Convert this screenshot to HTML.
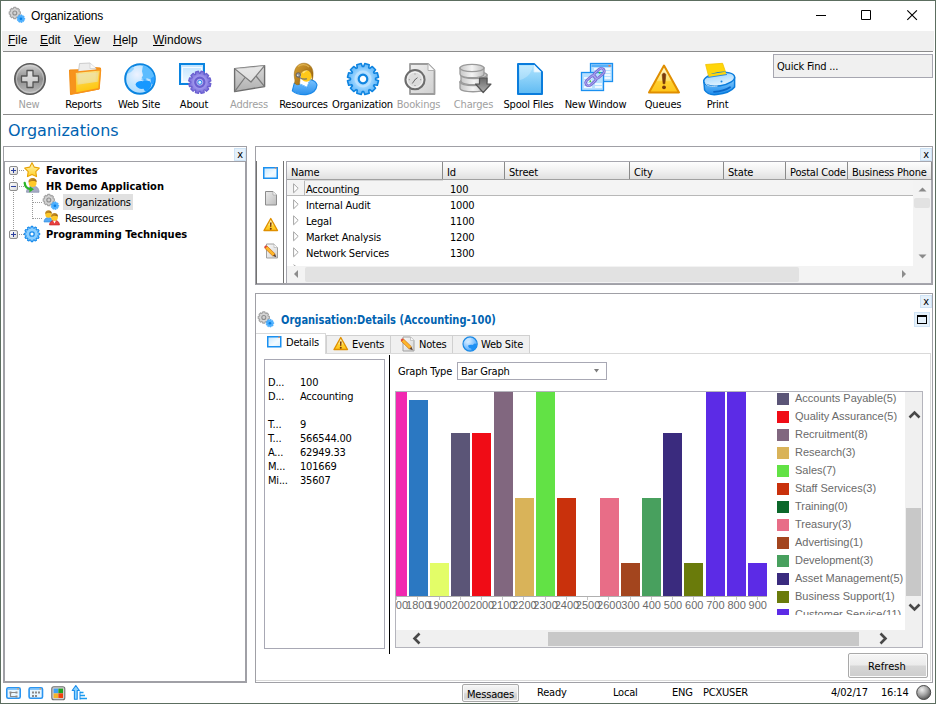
<!DOCTYPE html>
<html><head><meta charset="utf-8"><title>Organizations</title>
<style>
*{box-sizing:border-box;margin:0;padding:0}
html,body{width:936px;height:704px;overflow:hidden;background:#fff}
body{font-family:"DejaVu Sans Condensed","DejaVu Sans","Liberation Sans",sans-serif;font-size:11px;letter-spacing:-0.2px;color:#000;position:relative}
.abs,.t,.tb,.ic{position:absolute}
.t{white-space:nowrap;line-height:14px;font-size:11px;margin-top:1px}
#win{position:absolute;left:0;top:0;width:936px;height:704px;background:#fff}
#wb{position:absolute;left:0;top:0;width:936px;height:704px;border:1px solid #5c6e60;pointer-events:none}
#menubar{position:absolute;left:2px;top:31px;width:932px;height:20px;background:#f0f0f0}
.hline{position:absolute;height:1px;background:#8c8c8c}
.m{font-family:"Liberation Sans",sans-serif;letter-spacing:0;position:absolute;top:33px;font-size:12px;line-height:14px;white-space:nowrap}
.m u{text-decoration:underline;text-underline-offset:1px}
.tbl{position:absolute;top:98px;font-size:11px;line-height:14px;white-space:nowrap;text-align:center;transform:translateX(-50%)}
.dis{color:#a0a0a0}
.panel{position:absolute;border:2px solid #a3a3ab;background:#fff}
.xb{position:absolute;width:12px;height:14px;background:#e5f1fb;border:1px solid #cfe3f5;font-size:11px;line-height:11px;text-align:center;color:#000}
.tree{margin-top:1px;position:absolute;font-size:11px;line-height:16px;white-space:nowrap}
.b{font-weight:bold;letter-spacing:0}
.hd{position:absolute;top:162px;height:18px;border-right:1px solid #8a8a8a;background:linear-gradient(#fdfdfd,#f0f0f0 50%,#dedede);font-size:11px;line-height:18px;padding-top:2px;padding-left:4px;white-space:nowrap;overflow:hidden}
.row{margin-top:1px;position:absolute;font-size:11px;line-height:16px;white-space:nowrap}
.tab{position:absolute;top:335px;height:18px;background:#f0f0f0;border:1px solid #d0d0d0;border-bottom:none;font-size:11px;line-height:16px;white-space:nowrap}
.lg{position:absolute;left:777px;width:12px;height:12px}
.lt{font-family:"Liberation Sans",sans-serif;letter-spacing:0;position:absolute;left:795px;font-size:11px;line-height:14px;color:#6a6a6a;white-space:nowrap}
.bar{position:absolute}
.xl{font-family:"Liberation Sans",sans-serif;letter-spacing:0;position:absolute;top:599px;font-size:11px;line-height:14px;color:#6a6a6a;white-space:nowrap;transform:translateX(-50%)}
</style></head><body>
<div id="win">
<!-- title bar -->
<div class="t" id="title" style="left:31px;top:7px;font-family:'Liberation Sans',sans-serif;font-size:12px;line-height:16px;letter-spacing:-0.15px">Organizations</div>
<svg class="abs" style="left:810px;top:5px" width="114" height="20" viewBox="810 5 114 20"><path d="M816 15.500h10" stroke="#000" stroke-width="1"/><path d="M861.500 10.500h9v9h-9z" fill="none" stroke="#000" stroke-width="1"/><path d="M907.300 10.300l9.600 9.600M916.900 10.300l-9.600 9.600" stroke="#000" stroke-width="1.150"/></svg>
<!-- menu -->
<div id="menubar"></div>
<div class="m" style="left:8px"><u>F</u>ile</div>
<div class="m" style="left:40px"><u>E</u>dit</div>
<div class="m" style="left:74px"><u>V</u>iew</div>
<div class="m" style="left:113px"><u>H</u>elp</div>
<div class="m" style="left:153px"><u>W</u>indows</div>
<div class="hline" style="left:3px;top:51px;width:930px"></div>
<!-- toolbar -->
<!-- TOOLBAR ICONS -->
<svg class="abs" style="left:0;top:56px" width="936" height="44" viewBox="0 56 936 44">
<defs>
<linearGradient id="gNew" x1="0" y1="0" x2="0" y2="1"><stop offset="0" stop-color="#d2d2d2"/><stop offset=".5" stop-color="#8c8c8c"/><stop offset="1" stop-color="#bdbdbd"/></linearGradient>
<linearGradient id="gPlus" x1="0" y1="0" x2="0" y2="1"><stop offset="0" stop-color="#e6e6e6"/><stop offset="1" stop-color="#c4c4c4"/></linearGradient>
<linearGradient id="gFold" x1="0" y1="0" x2=".3" y2="1"><stop offset="0" stop-color="#f6e49a"/><stop offset=".55" stop-color="#ffdc40"/><stop offset="1" stop-color="#ffcd0a"/></linearGradient>
<radialGradient id="gGlobe" cx=".4" cy=".35" r=".75"><stop offset="0" stop-color="#eef2ff"/><stop offset=".45" stop-color="#c4e6ff"/><stop offset="1" stop-color="#a4d8ff"/></radialGradient>
<linearGradient id="gWin" x1="0" y1="0" x2="0" y2="1"><stop offset="0" stop-color="#bfe3ff"/><stop offset="1" stop-color="#f2faff"/></linearGradient>
<radialGradient id="gPGear" cx=".5" cy=".5" r=".5"><stop offset="0" stop-color="#c9c4f6"/><stop offset=".6" stop-color="#9a91ea"/><stop offset="1" stop-color="#7468d6"/></radialGradient>
<linearGradient id="gEnv" x1="0" y1="0" x2="0" y2="1"><stop offset="0" stop-color="#d8d8d8"/><stop offset="1" stop-color="#b0b0b0"/></linearGradient>
<radialGradient id="gBGear" cx=".5" cy=".5" r=".5"><stop offset="0" stop-color="#d6eeff"/><stop offset=".55" stop-color="#9ad4ff"/><stop offset="1" stop-color="#5cb4f8"/></radialGradient>
<linearGradient id="gDoc" x1="0" y1="0" x2="1" y2="1"><stop offset="0" stop-color="#f0f0f0"/><stop offset="1" stop-color="#cfcfcf"/></linearGradient>
<linearGradient id="gBDoc" x1="0" y1="0" x2="0" y2="1"><stop offset="0" stop-color="#b4e6ff"/><stop offset="1" stop-color="#5fbaf2"/></linearGradient>
<linearGradient id="gDb" x1="0" y1="0" x2="1" y2="0"><stop offset="0" stop-color="#c8c8c8"/><stop offset=".5" stop-color="#f4f4f4"/><stop offset="1" stop-color="#c0c0c0"/></linearGradient>
<linearGradient id="gArr" x1="0" y1="0" x2="0" y2="1"><stop offset="0" stop-color="#6a6a6a"/><stop offset="1" stop-color="#b0b0b0"/></linearGradient>
<linearGradient id="gWarn" x1="0" y1="0" x2="0" y2="1"><stop offset="0" stop-color="#fffbe0"/><stop offset=".55" stop-color="#ffe36a"/><stop offset=".6" stop-color="#ffd030"/><stop offset="1" stop-color="#ffc61a"/></linearGradient>
<linearGradient id="gPrnT" x1="0" y1="0" x2="0" y2="1"><stop offset="0" stop-color="#9ad4ff"/><stop offset="1" stop-color="#e4f4ff"/></linearGradient>
<linearGradient id="gPrnF" x1="0" y1="0" x2="0" y2="1"><stop offset="0" stop-color="#8cd0ff"/><stop offset="1" stop-color="#1e8cec"/></linearGradient>
<linearGradient id="gHair" x1="0" y1="0" x2="1" y2="1"><stop offset="0" stop-color="#d9a233"/><stop offset="1" stop-color="#8f5a08"/></linearGradient>
<linearGradient id="gBody" x1="0" y1="0" x2="0" y2="1"><stop offset="0" stop-color="#7cc4ff"/><stop offset="1" stop-color="#2a90ec"/></linearGradient>
</defs>
<!-- New -->
<g>
<circle cx="30" cy="79" r="15.2" fill="url(#gNew)" stroke="#5a5a5a" stroke-width="1.6"/>
<circle cx="30" cy="79" r="13.6" fill="none" stroke="#e0e0e0" stroke-opacity=".5" stroke-width="1"/>
<path d="M27 70.5h6v5.5h5.5v6H33v5.5h-6V82h-5.5v-6H27z" fill="url(#gPlus)" stroke="#555" stroke-width="1.3" stroke-linejoin="round"/>
</g>
<!-- Reports folder -->
<g>
<path d="M69.500 70l22.500 -.5l1-2l7.500 .5l-1.500 21l-28.500 5.500z" fill="#f7941d" stroke="#f28c12" stroke-width="1" stroke-linejoin="round"/>
<path d="M78.500 71l1-7.500l10.500-.5l6 5.500v13l-17.500 2z" fill="#ededed" stroke="#c2c2c2" stroke-width=".8"/>
<path d="M90 63.200v5.300h6" fill="#fafafa" stroke="#c8c8c8" stroke-width=".6"/>
<path d="M75 72.200l25.500-2.400l-1.500 19l-23.400 4.400z" fill="url(#gFold)" fill-opacity=".88" stroke="#f7941d" stroke-width="1.500" stroke-linejoin="round"/>
<path d="M77 74.300l21.500-2l-.8 9.500l-20.200 3z" fill="#e9e2c4" fill-opacity=".55"/>
</g>
<!-- Globe -->
<g>
<circle cx="140" cy="79" r="14.800" fill="url(#gGlobe)" stroke="#0a84e0" stroke-width="2"/>
<path d="M143 65.200c5.500 1 10.500 6 11.300 12.300l-4.300 1.700l-3-1l-2.500 1.500l-3-1.500l1.500-3l-1-4z" fill="#5cbcff"/>
<path d="M135.500 84.500c.5-2.500 3.500-3.800 7-3.300l3-.7l4.500 .8l1.500 3c-.5 3-2 5.500-4.500 7l-2 .3l-1.500-2.800c-3.500 .5-7-.8-8-4.300z" fill="#1798ff"/>
<path d="M150.500 78.500l4-2.500c.5 3 0 6-1.500 8.500l-2-1z" fill="#2aa0ff"/>
<path d="M141 79.800l4-.8 3 1.200-3.500 .8z" fill="#3aa8ff"/>
<path d="M127 74c1-3.500 3-6 6-7.500l1 2.500l-3 3z" fill="#8cd0ff" fill-opacity=".9"/>
</g>
<!-- About -->
<g>
<rect x="180" y="64" width="24" height="20" fill="url(#gWin)" stroke="#0a84e0" stroke-width="2"/>
<rect x="182.500" y="67.500" width="19" height="14" fill="none" stroke="#fff" stroke-opacity=".8" stroke-width="1"/>
<g transform="translate(199.800 82.300)">
<path id="pg" d="M8.99 0.47L11.13 1.29L10.28 4.45L8.02 4.09L7.55 4.90L8.99 6.68L6.68 8.99L4.90 7.55L4.09 8.02L4.45 10.28L1.29 11.13L0.47 8.99L-0.47 8.99L-1.29 11.13L-4.45 10.28L-4.09 8.02L-4.90 7.55L-6.68 8.99L-8.99 6.68L-7.55 4.90L-8.02 4.09L-10.28 4.45L-11.13 1.29L-8.99 0.47L-8.99 -0.47L-11.13 -1.29L-10.28 -4.45L-8.02 -4.09L-7.55 -4.90L-8.99 -6.68L-6.68 -8.99L-4.90 -7.55L-4.09 -8.02L-4.45 -10.28L-1.29 -11.13L-0.47 -8.99L0.47 -8.99L1.29 -11.13L4.45 -10.28L4.09 -8.02L4.90 -7.55L6.68 -8.99L8.99 -6.68L7.55 -4.90L8.02 -4.09L10.28 -4.45L11.13 -1.29L8.99 -0.47z" fill="url(#gPGear)" stroke="#6a5fd0" stroke-width="1.200" stroke-linejoin="round"/>
<circle r="4.600" fill="none" stroke="#6a5fd0" stroke-width="2.200"/>
<circle r="2" fill="#dff2ff" stroke="#2a8ce8" stroke-width="1"/>
</g>
</g>
<!-- Address envelope -->
<g>
<path d="M234.600 68.600L264.600 65.600V86.600L234.600 91.600z" fill="url(#gEnv)" stroke="#6e6e6e" stroke-width="1.400" stroke-linejoin="round"/>
<path d="M234.600 68.600L251 82L264.600 65.600" fill="#f2f2f2" fill-opacity=".6" stroke="#7a7a7a" stroke-width="1.200" stroke-linejoin="round"/>
<path d="M234.600 91.600L245 77.500M264.600 86.600L256 76" stroke="#7a7a7a" stroke-width="1.200"/>
</g>
<!-- Resources person -->
<g>
<path d="M294.300 83.200l5.700 1l6.700 3l3.800-7.700c3.500 1 6 3 6.500 5.400c-.5 5.500-5 9-11 9.700c-5.500 .3-10.500-1-13.700-3.800z" fill="url(#gBody)" stroke="#1a88e8" stroke-width="1.100" stroke-linejoin="round"/>
<path d="M304.800 83.500l1.900 3.800l1.600-4z" fill="#fff"/><path d="M300 84.200l6.700 3l3.800-7.700" fill="none" stroke="#8cccff" stroke-width="1"/>
<ellipse cx="306.300" cy="75.700" rx="5.600" ry="6" fill="#ffc81a"/>
<path d="M303 73c2-3 5-3.500 7.500-2.500c1 1.500 1.500 3 1.500 5" fill="none" stroke="#ffe27a" stroke-width="1.500"/>
<path d="M294.500 78c-1.500-9 3-14.800 9.500-14.800c6 0 9.800 5 9 12.500c-.2 2-.5 3.500-1 4.500c.3-5-1-9.500-5-10.200c-3.500-.3-6 2-7 5.500c0 4 0 7-.8 9c-1.700 .6-3.700 .2-4.700-1.500c.5-1.500 .5-3 0-5z" fill="url(#gHair)" stroke="#9a6608" stroke-width=".5"/>
<path d="M298 66.500c3-2.500 8-2.500 11 .5" fill="none" stroke="#e8c060" stroke-width="1.200" stroke-opacity=".7"/>
<circle cx="298.300" cy="75" r="2.300" fill="#909090" stroke="#606060" stroke-width=".8"/>
<circle cx="297.700" cy="75.200" r=".8" fill="#f0f0f0"/>
<path d="M299.500 77.300c1.500 1.500 4 2 7 1.600" fill="none" stroke="#707070" stroke-width="1.200" stroke-linecap="round"/>
</g>
<!-- Organization gear -->
<g transform="translate(363 79)">
<path d="M12.58 0.66L15.50 1.79L14.32 6.20L11.23 5.72L10.57 6.86L12.52 9.30L9.30 12.52L6.86 10.57L5.72 11.23L6.20 14.32L1.79 15.50L0.66 12.58L-0.66 12.58L-1.79 15.50L-6.20 14.32L-5.72 11.23L-6.86 10.57L-9.30 12.52L-12.52 9.30L-10.57 6.86L-11.23 5.72L-14.32 6.20L-15.50 1.79L-12.58 0.66L-12.58 -0.66L-15.50 -1.79L-14.32 -6.20L-11.23 -5.72L-10.57 -6.86L-12.52 -9.30L-9.30 -12.52L-6.86 -10.57L-5.72 -11.23L-6.20 -14.32L-1.79 -15.50L-0.66 -12.58L0.66 -12.58L1.79 -15.50L6.20 -14.32L5.72 -11.23L6.86 -10.57L9.30 -12.52L12.52 -9.30L10.57 -6.86L11.23 -5.72L14.32 -6.20L15.50 -1.79L12.58 -0.66z" fill="url(#gBGear)" stroke="#0f84e0" stroke-width="1.600" stroke-linejoin="round"/>
<circle r="7.500" fill="none" stroke="#c4e6ff" stroke-width="2" stroke-opacity=".7"/>
<circle r="4.300" fill="#fff" stroke="#0f84e0" stroke-width="2.200"/>
</g>
<!-- Bookings -->
<g>
<path d="M410 64h18l6.500 6.500V94H410z" fill="url(#gDoc)" stroke="#9c9c9c" stroke-width="1.800" stroke-linejoin="round"/>
<path d="M428 64v6.500h6.500" fill="#fafafa" stroke="#b0b0b0" stroke-width="1"/>
<circle cx="415" cy="79.700" r="9.600" fill="#dcdcdc" stroke="#6c6c6c" stroke-width="2"/>
<circle cx="415" cy="79.700" r="7.600" fill="none" stroke="#f4f4f4" stroke-width="1"/>
<path d="M415 79.700l2.200-1.800M415 79.700l-2.500 3.500" stroke="#6a6a6a" stroke-width="1" stroke-linecap="round"/><path d="M415 73.500v1M415 85v1M408.800 79.700h1M420.200 79.700h1" stroke="#8a8a8a" stroke-width="1"/>
</g>
<!-- Charges -->
<g>
<g fill="url(#gDb)" stroke="#9a9a9a" stroke-width="1.300">
<path d="M460 82v6c0 5 26 5 26 0v-6z"/><ellipse cx="473" cy="82" rx="13" ry="3.600"/>
<path d="M461 75v6c0 5 26 5 26 0v-6z"/><ellipse cx="474" cy="75" rx="13" ry="3.600"/>
<path d="M460 68v6c0 5 24 5 24 0v-6z"/><ellipse cx="472" cy="68" rx="12" ry="3.600"/>
</g>
<path d="M479.500 78h7.500v6h4l-7.800 8.500-7.700-8.500h4z" fill="url(#gArr)" stroke="#555" stroke-width="1.200" stroke-linejoin="round"/>
</g>
<!-- Spool Files -->
<g>
<path d="M518 64h16l8 8V94H518z" fill="url(#gBDoc)" stroke="#0a7cdc" stroke-width="2" stroke-linejoin="round"/>
<path d="M534 65v7h7z" fill="#f0faff" stroke="#d4eeff" stroke-width=".8"/>
<path d="M520 66h13c-2 8-6 12-13 14z" fill="#fff" fill-opacity=".25"/>
</g>
<!-- New Window -->
<g>
<rect x="590.500" y="63.500" width="22" height="18" fill="#b8e0ff" stroke="#1a90f0" stroke-width="1.300"/>
<rect x="591.500" y="64.500" width="20" height="2.500" fill="#58b0f8"/>
<rect x="608.500" y="65" width="2" height="1.500" fill="#ff7a3a"/>
<path d="M594 69h8M594 72h8M594 75h8M604.500 69h6M604.500 72h6M604.500 75h6M604.500 78h6" stroke="#fff" stroke-width="1.400"/>
<rect x="581.500" y="72.500" width="22" height="18" fill="#b8e0ff" stroke="#1a90f0" stroke-width="1.300"/>
<path d="M584 78h8M584 81h8M584 84h8M584 87h8M595 84h7M595 87h7" stroke="#fff" stroke-width="1.400"/>
<g transform="rotate(-42 595 77)" fill="none" stroke="#7a70d6" stroke-width="2.800"><rect x="583.500" y="74" width="12" height="6" rx="3"/><rect x="594.500" y="74" width="12" height="6" rx="3"/></g>
<g transform="rotate(-42 595 77)" fill="none" stroke="#b4acf0" stroke-width=".9"><rect x="583.500" y="74" width="12" height="6" rx="3"/><rect x="594.500" y="74" width="12" height="6" rx="3"/></g>
<circle cx="590.300" cy="81.300" r="1" fill="#3cc83c"/><circle cx="599.700" cy="72.700" r="1" fill="#3cc83c"/>
</g>
<!-- Queues -->
<g>
<path d="M664 65.500L679 92.500H649z" fill="url(#gWarn)" stroke="#e08e00" stroke-width="2" stroke-linejoin="round"/>
<path d="M662.200 75c0-2.400 3.600-2.400 3.600 0l-.9 8.800h-1.800z" fill="#7a3a0a" stroke="#7a3a0a" stroke-width=".6"/>
<circle cx="664" cy="87.300" r="1.900" fill="#7a3a0a"/>
</g>
<!-- Print -->
<g>
<path d="M705.600 64.500l17-1.200 3.400 10-17.500 2.600z" fill="#ffd60a" stroke="#f2c200" stroke-width=".8"/>
<path d="M703.800 80.500l.8 9.500c2 3.500 7 5 12 4.500c8-.8 15-3.500 18-7.500v-9.500z" fill="url(#gPrnF)" stroke="#0a7cdc" stroke-width="1.500" stroke-linejoin="round"/>
<ellipse cx="719.200" cy="79.200" rx="15.600" ry="6.600" transform="rotate(-9 719.200 79.200)" fill="url(#gPrnT)" stroke="#0a7cdc" stroke-width="1.500"/>
<path d="M708 74.500l1 2.800 17.500-2.600-1-3z" fill="#ffd60a"/>
<path d="M707.500 77.500l19.500-3" stroke="#2a8ce8" stroke-width="1"/>
<circle cx="721.500" cy="81.500" r="1" fill="#1a84e0"/>
<path d="M714 91.800c6-.2 12-1.800 16-4.500" fill="none" stroke="#0a68c8" stroke-width="1.800" stroke-linecap="round"/>
<path d="M705.500 83c1 3 6 4 12 3" fill="none" stroke="#e8f6ff" stroke-width="1" stroke-opacity=".8"/>
</g>
</svg>
<!-- /TOOLBAR ICONS -->
<div class="tbl dis" style="left:29px">New</div>
<div class="tbl" style="left:83.5px">Reports</div>
<div class="tbl" style="left:139px">Web Site</div>
<div class="tbl" style="left:194px">About</div>
<div class="tbl dis" style="left:249px">Address</div>
<div class="tbl" style="left:303.5px">Resources</div>
<div class="tbl" style="left:362.5px">Organization</div>
<div class="tbl dis" style="left:418.5px">Bookings</div>
<div class="tbl dis" style="left:473.5px">Charges</div>
<div class="tbl" style="left:528.5px">Spool Files</div>
<div class="tbl" style="left:595.5px">New Window</div>
<div class="tbl" style="left:663px">Queues</div>
<div class="tbl" style="left:717.5px">Print</div>
<div class="abs" style="left:773px;top:54px;width:160px;height:24px;background:#f0f0f0;border:1px solid #a6a6b0"></div>
<div class="t" style="left:777px;top:59px">Quick Find ...</div>
<div class="hline" style="left:3px;top:114px;width:930px"></div>
<!-- heading -->
<div class="t" id="heading" style="left:8px;top:118px;font-family:'DejaVu Sans',sans-serif;font-size:16px;line-height:24px;letter-spacing:0;color:#0063b1">Organizations</div>

<!-- left panel -->
<div class="abs" style="left:3px;top:146px;width:244px;height:537px;border:1px solid #a0a0a6;background:#fff"></div>
<div class="abs" style="left:3px;top:161px;width:244px;height:522px;border:2px solid #a0a0a6;border-top-width:1px;background:#fff"></div>
<div class="xb" style="left:234px;top:148px;width:12px;height:13px">x</div>
<svg class="abs" style="left:9px;top:166px" width="9" height="9" viewBox="0 0 9 9"><defs><linearGradient id="eg9166" x1="0" y1="0" x2="1" y2="1"><stop offset="0" stop-color="#fff"/><stop offset="1" stop-color="#d8d8d8"/></linearGradient></defs><rect x=".5" y=".5" width="8" height="8" rx="1.5" fill="url(#eg9166)" stroke="#8e8e8e"/><path d="M2 4.5h5M4.5 2v5" stroke="#2b3f9e" stroke-width="1"/></svg>
<svg class="abs" style="left:9px;top:182px" width="9" height="9" viewBox="0 0 9 9"><defs><linearGradient id="eg9182" x1="0" y1="0" x2="1" y2="1"><stop offset="0" stop-color="#fff"/><stop offset="1" stop-color="#d8d8d8"/></linearGradient></defs><rect x=".5" y=".5" width="8" height="8" rx="1.5" fill="url(#eg9182)" stroke="#8e8e8e"/><path d="M2 4.5h5" stroke="#2b3f9e" stroke-width="1"/></svg>
<svg class="abs" style="left:9px;top:230px" width="9" height="9" viewBox="0 0 9 9"><defs><linearGradient id="eg9230" x1="0" y1="0" x2="1" y2="1"><stop offset="0" stop-color="#fff"/><stop offset="1" stop-color="#d8d8d8"/></linearGradient></defs><rect x=".5" y=".5" width="8" height="8" rx="1.5" fill="url(#eg9230)" stroke="#8e8e8e"/><path d="M2 4.5h5M4.5 2v5" stroke="#2b3f9e" stroke-width="1"/></svg>
<div class="abs" style="left:19px;top:170px;width:5px;height:1px;background-image:linear-gradient(90deg,#9a9a9a 1px,transparent 1px);background-size:2px 1px"></div>
<div class="abs" style="left:19px;top:186px;width:5px;height:1px;background-image:linear-gradient(90deg,#9a9a9a 1px,transparent 1px);background-size:2px 1px"></div>
<div class="abs" style="left:19px;top:234px;width:5px;height:1px;background-image:linear-gradient(90deg,#9a9a9a 1px,transparent 1px);background-size:2px 1px"></div>
<div class="abs" style="left:13px;top:176px;width:1px;height:6px;background-image:linear-gradient(#9a9a9a 1px,transparent 1px);background-size:1px 2px"></div>
<div class="abs" style="left:13px;top:192px;width:1px;height:38px;background-image:linear-gradient(#9a9a9a 1px,transparent 1px);background-size:1px 2px"></div>
<div class="abs" style="left:32px;top:194px;width:1px;height:25px;background-image:linear-gradient(#9a9a9a 1px,transparent 1px);background-size:1px 2px"></div>
<div class="abs" style="left:33px;top:202px;width:10px;height:1px;background-image:linear-gradient(90deg,#9a9a9a 1px,transparent 1px);background-size:2px 1px"></div>
<div class="abs" style="left:33px;top:218px;width:10px;height:1px;background-image:linear-gradient(90deg,#9a9a9a 1px,transparent 1px);background-size:2px 1px"></div>
<div class="abs" style="left:63px;top:194px;width:70px;height:16px;background:#e0e0e0"></div>
<div class="tree b" style="left:46px;top:162px">Favorites</div>
<div class="tree b" style="left:46px;top:178px">HR Demo Application</div>
<div class="tree" style="left:65px;top:194px">Organizations</div>
<div class="tree" style="left:65px;top:210px">Resources</div>
<div class="tree b" style="left:46px;top:226px">Programming Techniques</div>
<!-- tree icons -->
<!-- grid panel -->
<div class="abs" style="left:255px;top:146px;width:678px;height:139px;border:1px solid #a0a0a6;background:#fff"></div>
<div class="abs" style="left:256px;top:161px;width:1px;height:123px;background:#727272"></div>
<div class="abs" style="left:257px;top:283px;width:675px;height:1px;background:#a0a0a6"></div>
<div class="abs" style="left:283px;top:161px;width:1px;height:122px;background:#727272"></div>

<div class="xb" style="left:920px;top:148px;width:12px;height:13px">x</div>
<div class="abs" style="left:286px;top:161px;width:646px;height:123px;border:1px solid #a6a6ae;background:#fff"></div>
<div class="hd" style="left:287px;width:156px">Name</div>
<div class="hd" style="left:443px;width:62px">Id</div>
<div class="hd" style="left:505px;width:125px">Street</div>
<div class="hd" style="left:630px;width:94px">City</div>
<div class="hd" style="left:724px;width:62px">State</div>
<div class="hd" style="left:786px;width:62px">Postal Code</div>
<div class="hd" style="left:848px;width:84px">Business Phone</div>
<div class="abs" style="left:287px;top:179px;width:644px;height:1px;background:#a0a0a0"></div>
<div class="abs" style="left:287px;top:180px;width:626px;height:16px;background:#f4f4f4;border-bottom:1px solid #b8b8b8"></div>
<div class="abs" style="left:304px;top:180px;width:1px;height:16px;background:#b8b8b8"></div>
<div class="abs" style="left:304px;top:180px;width:139px;height:1px;background:#d8d8d8"></div>
<svg class="abs" style="left:293px;top:183px" width="6" height="11" viewBox="0 0 6 11"><path d="M.6 .8L5.200 5.300L.6 9.800z" fill="#fff" stroke="#a4a4a4" stroke-width="1"/></svg>
<div class="row" style="left:306px;top:181px">Accounting</div>
<div class="row" style="left:450px;top:181px">100</div>
<svg class="abs" style="left:293px;top:199px" width="6" height="11" viewBox="0 0 6 11"><path d="M.6 .8L5.200 5.300L.6 9.800z" fill="#fff" stroke="#a4a4a4" stroke-width="1"/></svg>
<div class="row" style="left:306px;top:197px">Internal Audit</div>
<div class="row" style="left:450px;top:197px">1000</div>
<svg class="abs" style="left:293px;top:215px" width="6" height="11" viewBox="0 0 6 11"><path d="M.6 .8L5.200 5.300L.6 9.800z" fill="#fff" stroke="#a4a4a4" stroke-width="1"/></svg>
<div class="row" style="left:306px;top:213px">Legal</div>
<div class="row" style="left:450px;top:213px">1100</div>
<svg class="abs" style="left:293px;top:231px" width="6" height="11" viewBox="0 0 6 11"><path d="M.6 .8L5.200 5.300L.6 9.800z" fill="#fff" stroke="#a4a4a4" stroke-width="1"/></svg>
<div class="row" style="left:306px;top:229px">Market Analysis</div>
<div class="row" style="left:450px;top:229px">1200</div>
<svg class="abs" style="left:293px;top:247px" width="6" height="11" viewBox="0 0 6 11"><path d="M.6 .8L5.200 5.300L.6 9.800z" fill="#fff" stroke="#a4a4a4" stroke-width="1"/></svg>
<div class="row" style="left:306px;top:245px">Network Services</div>
<div class="row" style="left:450px;top:245px">1300</div>
<svg class="abs" style="left:293px;top:264px" width="6" height="2" viewBox="0 0 6 2"><path d="M.5 .7L3 2.5" fill="none" stroke="#a6a6a6"/></svg>
<div class="abs" style="left:287px;top:266px;width:626px;height:17px;background:#f3f3f3"></div>
<div class="abs" style="left:305px;top:267px;width:494px;height:15px;background:#e2e2e2;border-radius:2px"></div>
<svg class="abs" style="left:294px;top:270px" width="4" height="8" viewBox="0 0 4 8"><path d="M4 0v8L0 4z" fill="#8c8c8c"/></svg>
<svg class="abs" style="left:902px;top:270px" width="4" height="8" viewBox="0 0 4 8"><path d="M0 0v8L4 4z" fill="#8c8c8c"/></svg>
<div class="abs" style="left:913px;top:180px;width:18px;height:103px;background:#f3f3f3"></div>
<div class="abs" style="left:914px;top:198px;width:16px;height:10px;background:#e2e2e2;border-radius:2px"></div>
<svg class="abs" style="left:918px;top:187px" width="9" height="5" viewBox="0 0 9 5"><path d="M.5 4.5h8L4.5 .5z" fill="#8a8a8a"/></svg>
<svg class="abs" style="left:918px;top:254px" width="9" height="5" viewBox="0 0 9 5"><path d="M.5 .5h8L4.5 4.5z" fill="#8a8a8a"/></svg>
<!-- grid side icons -->
<!-- detail panel -->
<div class="abs" style="left:255px;top:293px;width:678px;height:390px;border:1px solid #a0a0a6;background:#fff"></div>
<div class="xb" style="left:920px;top:295px;width:12px;height:13px">x</div>
<div class="abs" style="left:914px;top:312px;width:16px;height:15px;background:#e5f1fb;border:1px solid #cfe3f5"></div>
<div class="abs" style="left:917px;top:315px;width:10px;height:9px;border:1px solid #000;border-top-width:2px"></div>
<div class="t b" id="dtitle" style="left:281px;top:313px;color:#0063b1;transform:scaleY(1.13);transform-origin:0 85%;font-family:'DejaVu Sans',sans-serif;font-stretch:condensed">Organisation:Details (Accounting-100)</div>
<div class="abs" style="left:256px;top:353px;width:675px;height:328px;border:1px solid #d9d9d9;border-left:none;background:#fff"></div>
<div class="tab" style="left:326px;width:65px"></div>
<div class="tab" style="left:390px;width:63px"></div>
<div class="tab" style="left:452px;width:78px"></div>
<div class="abs" style="left:256px;top:333px;width:70px;height:21px;background:#fff;border:1px solid #d9d9d9;border-bottom:none;border-left:none"></div>
<div class="t" style="left:286px;top:335px">Details</div>
<div class="t" style="left:352px;top:337px">Events</div>
<div class="t" style="left:419px;top:337px">Notes</div>
<div class="t" style="left:481px;top:337px">Web Site</div>
<!-- tab icons -->
<div class="abs" style="left:264px;top:359px;width:121px;height:290px;border:1px solid #a8a8b4;background:#fff"></div>
<div class="abs" style="left:389px;top:355px;width:1px;height:299px;background:#000"></div>
<div class="t" style="left:268px;top:375px">D...</div><div class="t" style="left:300px;top:375px">100</div>
<div class="t" style="left:268px;top:389px">D...</div><div class="t" style="left:300px;top:389px">Accounting</div>
<div class="t" style="left:268px;top:417px">T...</div><div class="t" style="left:300px;top:417px">9</div>
<div class="t" style="left:268px;top:431px">T...</div><div class="t" style="left:300px;top:431px">566544.00</div>
<div class="t" style="left:268px;top:445px">A...</div><div class="t" style="left:300px;top:445px">62949.33</div>
<div class="t" style="left:268px;top:459px">M...</div><div class="t" style="left:300px;top:459px">101669</div>
<div class="t" style="left:268px;top:473px">Mi...</div><div class="t" style="left:300px;top:473px">35607</div>
<div class="t" style="left:398px;top:364px">Graph Type</div>
<div class="abs" style="left:457px;top:362px;width:150px;height:18px;border:1px solid #a8a8b4;background:#fff"></div>
<div class="t" style="left:461px;top:364px">Bar Graph</div>
<svg class="abs" style="left:594px;top:369px" width="5" height="4" viewBox="0 0 5 4"><path d="M0 0h5L2.500 3.600z" fill="#7c7c7c"/></svg>
<div id="chart" class="abs" style="left:395px;top:391px;width:528px;height:257px;border:1px solid #b4b4bc;background:#fff;overflow:hidden">
<div class="bar" style="left:-8.4px;top:0px;width:19px;height:204px;background:#f128b0"></div>
<div class="bar" style="left:13px;top:8px;width:19px;height:196px;background:#2b78c2"></div>
<div class="bar" style="left:34px;top:171px;width:19px;height:33px;background:#e3fd68"></div>
<div class="bar" style="left:55px;top:41px;width:19px;height:163px;background:#5b5577"></div>
<div class="bar" style="left:76.4px;top:41px;width:19px;height:163px;background:#f00c16"></div>
<div class="bar" style="left:97.6px;top:0px;width:19px;height:204px;background:#81677f"></div>
<div class="bar" style="left:119px;top:106px;width:19px;height:98px;background:#d9b359"></div>
<div class="bar" style="left:140px;top:0px;width:19px;height:204px;background:#62e245"></div>
<div class="bar" style="left:161px;top:106px;width:19px;height:98px;background:#c9310c"></div>
<div class="bar" style="left:203.8px;top:106px;width:19px;height:98px;background:#e86d87"></div>
<div class="bar" style="left:225px;top:171px;width:19px;height:33px;background:#a3451e"></div>
<div class="bar" style="left:246px;top:106px;width:19px;height:98px;background:#48a05e"></div>
<div class="bar" style="left:267px;top:41px;width:19px;height:163px;background:#3a2b7e"></div>
<div class="bar" style="left:288.3px;top:171px;width:19px;height:33px;background:#6a7b0b"></div>
<div class="bar" style="left:309.5px;top:0px;width:19px;height:204px;background:#5c2be6"></div>
<div class="bar" style="left:330.7px;top:0px;width:19px;height:204px;background:#5c2be6"></div>
<div class="bar" style="left:352px;top:171px;width:19px;height:33px;background:#5c2be6"></div>
<div class="abs" style="left:0;top:204px;width:371px;height:1px;background:#b0b0b0"></div>
<div class="abs" style="left:0.1px;top:205px;width:1px;height:3px;background:#c4c4c4"></div>
<div class="xl" style="left:-0.2px;top:206px">1700</div>
<div class="abs" style="left:21.3px;top:205px;width:1px;height:3px;background:#c4c4c4"></div>
<div class="xl" style="left:22.3px;top:206px">1800</div>
<div class="abs" style="left:42.5px;top:205px;width:1px;height:3px;background:#c4c4c4"></div>
<div class="xl" style="left:43.5px;top:206px">1900</div>
<div class="abs" style="left:63.8px;top:205px;width:1px;height:3px;background:#c4c4c4"></div>
<div class="xl" style="left:64.8px;top:206px">200</div>
<div class="abs" style="left:85.0px;top:205px;width:1px;height:3px;background:#c4c4c4"></div>
<div class="xl" style="left:86.0px;top:206px">2000</div>
<div class="abs" style="left:106.2px;top:205px;width:1px;height:3px;background:#c4c4c4"></div>
<div class="xl" style="left:107.2px;top:206px">2100</div>
<div class="abs" style="left:127.4px;top:205px;width:1px;height:3px;background:#c4c4c4"></div>
<div class="xl" style="left:128.4px;top:206px">2200</div>
<div class="abs" style="left:148.6px;top:205px;width:1px;height:3px;background:#c4c4c4"></div>
<div class="xl" style="left:149.6px;top:206px">2300</div>
<div class="abs" style="left:169.9px;top:205px;width:1px;height:3px;background:#c4c4c4"></div>
<div class="xl" style="left:170.9px;top:206px">2400</div>
<div class="abs" style="left:191.1px;top:205px;width:1px;height:3px;background:#c4c4c4"></div>
<div class="xl" style="left:192.1px;top:206px">2500</div>
<div class="abs" style="left:212.3px;top:205px;width:1px;height:3px;background:#c4c4c4"></div>
<div class="xl" style="left:213.3px;top:206px">2600</div>
<div class="abs" style="left:233.5px;top:205px;width:1px;height:3px;background:#c4c4c4"></div>
<div class="xl" style="left:234.5px;top:206px">300</div>
<div class="abs" style="left:254.7px;top:205px;width:1px;height:3px;background:#c4c4c4"></div>
<div class="xl" style="left:255.7px;top:206px">400</div>
<div class="abs" style="left:276.0px;top:205px;width:1px;height:3px;background:#c4c4c4"></div>
<div class="xl" style="left:277.0px;top:206px">500</div>
<div class="abs" style="left:297.2px;top:205px;width:1px;height:3px;background:#c4c4c4"></div>
<div class="xl" style="left:298.2px;top:206px">600</div>
<div class="abs" style="left:318.4px;top:205px;width:1px;height:3px;background:#c4c4c4"></div>
<div class="xl" style="left:319.4px;top:206px">700</div>
<div class="abs" style="left:339.6px;top:205px;width:1px;height:3px;background:#c4c4c4"></div>
<div class="xl" style="left:340.6px;top:206px">800</div>
<div class="abs" style="left:360.8px;top:205px;width:1px;height:3px;background:#c4c4c4"></div>
<div class="xl" style="left:361.8px;top:206px">900</div>
<div class="abs" style="left:374px;top:0;width:135px;height:223px;overflow:hidden;background:#fff">
<div class="lg" style="left:7px;top:1px;background:#5b5577"></div><div class="lt" style="left:25px;top:-1px">Accounts Payable(5)</div>
<div class="lg" style="left:7px;top:19px;background:#f00c16"></div><div class="lt" style="left:25px;top:17px">Quality Assurance(5)</div>
<div class="lg" style="left:7px;top:37px;background:#81677f"></div><div class="lt" style="left:25px;top:35px">Recruitment(8)</div>
<div class="lg" style="left:7px;top:55px;background:#d9b359"></div><div class="lt" style="left:25px;top:53px">Research(3)</div>
<div class="lg" style="left:7px;top:73px;background:#62e245"></div><div class="lt" style="left:25px;top:71px">Sales(7)</div>
<div class="lg" style="left:7px;top:91px;background:#c9310c"></div><div class="lt" style="left:25px;top:89px">Staff Services(3)</div>
<div class="lg" style="left:7px;top:109px;background:#0b672a"></div><div class="lt" style="left:25px;top:107px">Training(0)</div>
<div class="lg" style="left:7px;top:127px;background:#e86d87"></div><div class="lt" style="left:25px;top:125px">Treasury(3)</div>
<div class="lg" style="left:7px;top:145px;background:#a3451e"></div><div class="lt" style="left:25px;top:143px">Advertising(1)</div>
<div class="lg" style="left:7px;top:163px;background:#48a05e"></div><div class="lt" style="left:25px;top:161px">Development(3)</div>
<div class="lg" style="left:7px;top:181px;background:#3a2b7e"></div><div class="lt" style="left:25px;top:179px">Asset Management(5)</div>
<div class="lg" style="left:7px;top:199px;background:#6a7b0b"></div><div class="lt" style="left:25px;top:197px">Business Support(1)</div>
<div class="lg" style="left:7px;top:217px;background:#5c2be6"></div><div class="lt" style="left:25px;top:215px">Customer Service(11)</div>
</div>
<div class="abs" style="left:509px;top:0;width:18px;height:256px;background:#f0f0f0"></div>
<div class="abs" style="left:510px;top:116px;width:15px;height:88px;background:#c8c8c8"></div>
<div class="abs" style="left:0;top:238px;width:509px;height:18px;background:#f0f0f0"></div>
<div class="abs" style="left:152px;top:240px;width:311px;height:14px;background:#c8c8c8"></div>
<svg class="abs" style="left:512px;top:18px" width="13" height="9" viewBox="0 0 13 9"><path d="M1.5 7.5L6.5 2.5L11.5 7.5" fill="none" stroke="#484848" stroke-width="2.6"/></svg>
<svg class="abs" style="left:512px;top:211px" width="13" height="9" viewBox="0 0 13 9"><path d="M1.5 1.5L6.5 6.5L11.5 1.5" fill="none" stroke="#484848" stroke-width="2.6"/></svg>
<svg class="abs" style="left:16px;top:240px" width="9" height="13" viewBox="0 0 9 13"><path d="M7.5 1.5L2.5 6.5L7.5 11.5" fill="none" stroke="#484848" stroke-width="2.6"/></svg>
<svg class="abs" style="left:483px;top:240px" width="9" height="13" viewBox="0 0 9 13"><path d="M1.5 1.5L6.5 6.5L1.5 11.5" fill="none" stroke="#484848" stroke-width="2.6"/></svg>
</div>
<div class="abs" style="left:848px;top:653px;width:80px;height:25px;border:1px solid #a9a9a9;border-radius:2px;background:linear-gradient(#f6f6f6,#ebebeb 48%,#d6d6d6 52%,#cdcdcd);box-shadow:inset 0 0 0 1px #fbfbfb"></div>
<div class="t" style="left:868px;top:659px;letter-spacing:0.1px">Refresh</div>

<!-- status bar -->
<div class="abs" style="left:462px;top:684px;width:57px;height:18px;border:1px solid #a9a9a9;border-radius:2px;background:linear-gradient(#f6f6f6,#e9e9e9 45%,#d8d8d8 55%,#d2d2d2 80%,#e4e4e4);box-shadow:inset 0 0 0 1px #f8f8f8"><div class="abs" style="left:0;top:0;width:55px;height:13px;overflow:hidden"><div class="t" style="left:4px;top:2px">Messages</div></div></div>
<!-- ball -->
<!-- status icons -->
<div class="t" style="left:537px;top:685px">Ready</div>
<div class="t" style="left:613px;top:685px">Local</div>
<div class="t" style="left:672px;top:685px">ENG</div>
<div class="t" style="left:703px;top:685px">PCXUSER</div>
<div class="t" style="left:831px;top:685px">4/02/17</div>
<div class="t" style="left:881px;top:685px">16:14</div>
</div>
<!-- SMALL ICONS -->
<svg class="abs" style="left:0;top:0;pointer-events:none" width="936" height="704" viewBox="0 0 936 704">
<defs>
<linearGradient id="gWin2" x1="0" y1="0" x2="1" y2="1"><stop offset="0" stop-color="#c4e6ff"/><stop offset=".6" stop-color="#f4fbff"/><stop offset="1" stop-color="#d8efff"/></linearGradient>
<linearGradient id="gDoc2" x1="0" y1="0" x2="1" y2="1"><stop offset="0" stop-color="#ececec"/><stop offset="1" stop-color="#bcbcbc"/></linearGradient>
<linearGradient id="gDoc3" x1="0" y1="0" x2="1" y2="1"><stop offset="0" stop-color="#fafafa"/><stop offset="1" stop-color="#d4d4d4"/></linearGradient>
<radialGradient id="gGlobe2" cx=".35" cy=".3" r=".8"><stop offset="0" stop-color="#e4f2ff"/><stop offset=".6" stop-color="#7cc0ff"/><stop offset="1" stop-color="#3c9cf4"/></radialGradient>
<linearGradient id="gStar" x1="0" y1="0" x2="0" y2="1"><stop offset="0" stop-color="#fff6b8"/><stop offset="1" stop-color="#ffd028"/></linearGradient>
<radialGradient id="gBall" cx=".38" cy=".3" r=".75"><stop offset="0" stop-color="#f0f0f0"/><stop offset=".5" stop-color="#a8a8a8"/><stop offset="1" stop-color="#505050"/></radialGradient>
<linearGradient id="gHair2" x1="0" y1="0" x2="1" y2="1"><stop offset="0" stop-color="#d9a233"/><stop offset="1" stop-color="#8f5a08"/></linearGradient>
</defs>
<path d="M19.19 11.63L20.39 11.90L20.39 14.10L19.19 14.37L18.87 15.14L19.53 16.17L17.97 17.73L16.94 17.07L16.17 17.39L15.90 18.59L13.70 18.59L13.43 17.39L12.66 17.07L11.63 17.73L10.07 16.17L10.73 15.14L10.41 14.37L9.21 14.10L9.21 11.90L10.41 11.63L10.73 10.86L10.07 9.83L11.63 8.27L12.66 8.93L13.43 8.61L13.70 7.41L15.90 7.41L16.17 8.61L16.94 8.93L17.97 8.27L19.53 9.83L18.87 10.86z" fill="#d4d4d4" stroke="#a4a4a4" stroke-width="1.1" stroke-linejoin="round"/><circle cx="14.8" cy="13" r="2" fill="#d0d0d0" stroke="#8e8e8e" stroke-width="1.1"/><path d="M23.90 17.90L24.75 18.05L24.75 19.35L23.90 19.50L23.71 20.02L24.26 20.67L23.43 21.67L22.68 21.24L22.20 21.51L22.21 22.37L20.93 22.60L20.64 21.79L20.09 21.69L19.54 22.36L18.41 21.71L18.71 20.90L18.36 20.47L17.51 20.63L17.06 19.40L17.81 18.98L17.81 18.42L17.06 18.00L17.51 16.77L18.36 16.93L18.71 16.50L18.41 15.69L19.54 15.04L20.09 15.71L20.64 15.61L20.93 14.80L22.21 15.03L22.20 15.89L22.68 16.16L23.43 15.73L24.26 16.73L23.71 17.38z" fill="#4cb0ff" stroke="#3aa4fa" stroke-width=".6" stroke-linejoin="round"/><circle cx="20.9" cy="18.7" r="1.3" fill="#0a7ee0"/>
<path d="M32.00 162.70L34.35 167.16L39.32 168.02L35.80 171.64L36.53 176.63L32.00 174.40L27.47 176.63L28.20 171.64L24.68 168.02L29.65 167.16z" fill="url(#gStar)" stroke="#e8a200" stroke-width="1.1" stroke-linejoin="round"/>
<path d="M26.500 192.300c0-4 2.500-6 6-6h1c3.500 0 5.500 2 5.500 6z" fill="#a6abc4" stroke="#8890b0" stroke-width=".7"/>
<circle cx="32.600" cy="183" r="3.900" fill="#ffc928"/>
<path d="M28.600 182.500c-.5-3 1.500-4.600 4-4.600s4.500 1.600 4 4.400c-1.500-1.500-4.800-2-8 .2z" fill="url(#gHair2)"/>
<path d="M24.700 183c.3 3.500 2.500 5.800 6 6.200" fill="none" stroke="#2cb428" stroke-width="2.300" stroke-linecap="round"/>
<path d="M30 186.500l4 2.700-4.800 3.200z" fill="#2cb428"/>
<path d="M53.19 198.63L54.39 198.90L54.39 201.10L53.19 201.37L52.87 202.14L53.53 203.17L51.97 204.73L50.94 204.07L50.17 204.39L49.90 205.59L47.70 205.59L47.43 204.39L46.66 204.07L45.63 204.73L44.07 203.17L44.73 202.14L44.41 201.37L43.21 201.10L43.21 198.90L44.41 198.63L44.73 197.86L44.07 196.83L45.63 195.27L46.66 195.93L47.43 195.61L47.70 194.41L49.90 194.41L50.17 195.61L50.94 195.93L51.97 195.27L53.53 196.83L52.87 197.86z" fill="#d4d4d4" stroke="#a4a4a4" stroke-width="1.1" stroke-linejoin="round"/><circle cx="48.8" cy="200" r="2" fill="#d0d0d0" stroke="#8e8e8e" stroke-width="1.1"/><path d="M57.90 204.90L58.75 205.05L58.75 206.35L57.90 206.50L57.71 207.02L58.26 207.67L57.43 208.67L56.68 208.24L56.20 208.51L56.21 209.37L54.93 209.60L54.64 208.79L54.09 208.69L53.54 209.36L52.41 208.71L52.71 207.90L52.36 207.47L51.51 207.63L51.06 206.40L51.81 205.98L51.81 205.42L51.06 205.00L51.51 203.77L52.36 203.93L52.71 203.50L52.41 202.69L53.54 202.04L54.09 202.71L54.64 202.61L54.93 201.80L56.21 202.03L56.20 202.89L56.68 203.16L57.43 202.73L58.26 203.73L57.71 204.38z" fill="#4cb0ff" stroke="#3aa4fa" stroke-width=".6" stroke-linejoin="round"/><circle cx="54.9" cy="205.7" r="1.3" fill="#0a7ee0"/>
<path d="M44 222c0-3 2-4.500 4.500-4.500s4.500 1.500 4.500 4.500z" fill="#58aaf4" stroke="#2a86dc" stroke-width=".6"/>
<circle cx="48.500" cy="214.500" r="3.200" fill="#ffc928"/><path d="M45.200 214c-.3-2.500 1.300-3.800 3.300-3.800s3.600 1.300 3.300 3.500c-1.500-1.200-4-1.500-6.600 .3z" fill="url(#gHair2)"/>
<path d="M49.500 225c0-3 2.300-4.800 5-4.800s5 1.800 5 4.800z" fill="#e84040" stroke="#c02020" stroke-width=".6"/>
<path d="M53 220.500l1.500 3 1.500-3z" fill="#fff"/>
<circle cx="54.500" cy="217.500" r="3.300" fill="#ffc928"/><path d="M51.100 217c-.3-2.500 1.300-3.900 3.400-3.900s3.700 1.300 3.400 3.600c-1.500-1.200-4.200-1.500-6.800 .3z" fill="url(#gHair2)"/>
<path d="M38.22 232.98L39.66 233.20L39.66 234.80L38.22 235.02L37.89 236.23L39.03 237.13L38.23 238.53L36.88 237.99L35.99 238.88L36.53 240.23L35.13 241.03L34.23 239.89L33.02 240.22L32.80 241.66L31.20 241.66L30.98 240.22L29.77 239.89L28.87 241.03L27.47 240.23L28.01 238.88L27.12 237.99L25.77 238.53L24.97 237.13L26.11 236.23L25.78 235.02L24.34 234.80L24.34 233.20L25.78 232.98L26.11 231.77L24.97 230.87L25.77 229.47L27.12 230.01L28.01 229.12L27.47 227.77L28.87 226.97L29.77 228.11L30.98 227.78L31.20 226.34L32.80 226.34L33.02 227.78L34.23 228.11L35.13 226.97L36.53 227.77L35.99 229.12L36.88 230.01L38.23 229.47L39.03 230.87L37.89 231.77z" fill="#8ccfff" stroke="#1a8cec" stroke-width="1.1" stroke-linejoin="round"/>
<circle cx="32" cy="234" r="2.200" fill="#fff" stroke="#1a8cec" stroke-width="1.300"/>
<rect x="263.75" y="167.75" width="13.5" height="10.5" fill="url(#gWin2)" stroke="#1a90f0" stroke-width="1.5"/><rect x="274.8" y="167.6" width="1.6" height="1.2" fill="#ff8a4a"/>
<path d="M265.5 191.5h7.5l3.500 3.500v10.0h-11z" fill="url(#gDoc2)" stroke="#8c8c8c" stroke-width="1" stroke-linejoin="round"/><path d="M273 191.5v3.500h3.500" fill="#f4f4f4" stroke="#a8a8a8" stroke-width=".7"/>
<path d="M270.75 218.5L277.5 230.5H264z" fill="url(#gWarn)" stroke="#e09000" stroke-width="1.4" stroke-linejoin="round"/><path d="M269.85 222.5h1.8l-.4 4.6h-1z" fill="#7a3a0a"/><circle cx="270.75" cy="228.7" r="1" fill="#7a3a0a"/>
<path d="M266.5 244.0h7.500l3.500 3.500v10.500h-11z" fill="url(#gDoc3)" stroke="#a0a0a0" stroke-width="1" stroke-linejoin="round"/><path d="M274.0 244.0v3.500h3.500" fill="#fafafa" stroke="#b4b4b4" stroke-width=".7"/><path d="M264.7 248.1l2.200 -2.200l8.200 8.000l-2.200 2.200z" fill="#ffb62a" stroke="#d07a10" stroke-width=".8" stroke-linejoin="round"/><path d="M264.1 246.9l1.600 -1.600l1.500 1.300l-2.000 2.000z" fill="#e0453a"/><path d="M272.9 256.1l2.200 -2.200l1.300 3.400z" fill="#5a4030"/>
<path d="M268.19 316.13L269.39 316.40L269.39 318.60L268.19 318.87L267.87 319.64L268.53 320.67L266.97 322.23L265.94 321.57L265.17 321.89L264.90 323.09L262.70 323.09L262.43 321.89L261.66 321.57L260.63 322.23L259.07 320.67L259.73 319.64L259.41 318.87L258.21 318.60L258.21 316.40L259.41 316.13L259.73 315.36L259.07 314.33L260.63 312.77L261.66 313.43L262.43 313.11L262.70 311.91L264.90 311.91L265.17 313.11L265.94 313.43L266.97 312.77L268.53 314.33L267.87 315.36z" fill="#d4d4d4" stroke="#a4a4a4" stroke-width="1.1" stroke-linejoin="round"/><circle cx="263.8" cy="317.5" r="2" fill="#d0d0d0" stroke="#8e8e8e" stroke-width="1.1"/><path d="M272.90 322.40L273.75 322.55L273.75 323.85L272.90 324.00L272.71 324.52L273.26 325.17L272.43 326.17L271.68 325.74L271.20 326.01L271.21 326.87L269.93 327.10L269.64 326.29L269.09 326.19L268.54 326.86L267.41 326.21L267.71 325.40L267.36 324.97L266.51 325.13L266.06 323.90L266.81 323.48L266.81 322.92L266.06 322.50L266.51 321.27L267.36 321.43L267.71 321.00L267.41 320.19L268.54 319.54L269.09 320.21L269.64 320.11L269.93 319.30L271.21 319.53L271.20 320.39L271.68 320.66L272.43 320.23L273.26 321.23L272.71 321.88z" fill="#4cb0ff" stroke="#3aa4fa" stroke-width=".6" stroke-linejoin="round"/><circle cx="269.9" cy="323.2" r="1.3" fill="#0a7ee0"/>
<rect x="267.75" y="336.75" width="13.0" height="10.0" fill="url(#gWin2)" stroke="#1a90f0" stroke-width="1.5"/><rect x="278.3" y="336.6" width="1.6" height="1.2" fill="#ff8a4a"/>
<path d="M340.75 337.5L347.5 349.5H334z" fill="url(#gWarn)" stroke="#e09000" stroke-width="1.4" stroke-linejoin="round"/><path d="M339.85 341.5h1.8l-.4 4.6h-1z" fill="#7a3a0a"/><circle cx="340.75" cy="347.7" r="1" fill="#7a3a0a"/>
<path d="M403 337.0h7.500l3.500 3.500v10.500h-11z" fill="url(#gDoc3)" stroke="#a0a0a0" stroke-width="1" stroke-linejoin="round"/><path d="M410.5 337.0v3.500h3.500" fill="#fafafa" stroke="#b4b4b4" stroke-width=".7"/><path d="M401.2 341.1l2.200 -2.200l8.200 8.000l-2.200 2.200z" fill="#ffb62a" stroke="#d07a10" stroke-width=".8" stroke-linejoin="round"/><path d="M400.6 339.9l1.600 -1.600l1.500 1.300l-2.000 2.000z" fill="#e0453a"/><path d="M409.4 349.1l2.200 -2.200l1.300 3.400z" fill="#5a4030"/>
<circle cx="470.1" cy="344.0" r="7.1" fill="url(#gGlobe2)" stroke="#1a88e4" stroke-width="1.2"/><path d="M468.1 345.5c1.500-1 3-1 4.500-.5l2-1.500 2 .5c.5 1.500 0 3-.5 4l-2 2c-1 1-2 1-2.500 0l-.5-1.500c-1.500 0-3-1-3-3z" fill="#1e90f4"/><path d="M465.1 341.0c1.500-2 4-2.800 6-2.800l-1.500 2.500-3 1.500z" fill="#c4e4ff" fill-opacity=".9"/>
<rect x="6.8" y="687.8" width="13.400" height="10.400" rx="1.500" fill="#e8f6ff" stroke="#2a94f0" stroke-width="1.600"/><path d="M7.5 689.2h12" stroke="#5cb0f8" stroke-width="1"/><rect x="17.3" y="688.2" width="1.400" height="1.200" fill="#ff9a3a"/>
<path d="M10.500 692.500v4h6M10.500 692.500h6" fill="none" stroke="#8a8a8a" stroke-width="1.200"/><rect x="15.500" y="691.500" width="2" height="2" fill="#8a8a8a"/><rect x="15.500" y="695.500" width="2" height="2" fill="#8a8a8a"/><rect x="9.500" y="691.500" width="2" height="2" fill="#8a8a8a"/>
<rect x="29.1" y="687.8" width="13.400" height="10.400" rx="1.500" fill="#e8f6ff" stroke="#2a94f0" stroke-width="1.600"/><path d="M29.8 689.2h12" stroke="#5cb0f8" stroke-width="1"/><rect x="39.6" y="688.2" width="1.400" height="1.200" fill="#ff9a3a"/>
<rect x="32" y="691.5" width="2" height="2" fill="#8a8a8a"/><rect x="35" y="691.5" width="2" height="2" fill="#8a8a8a"/><rect x="38" y="691.5" width="2" height="2" fill="#8a8a8a"/><rect x="32" y="695" width="2" height="2" fill="#8a8a8a"/><rect x="35" y="695" width="2" height="2" fill="#8a8a8a"/>
<rect x="51.800" y="686.700" width="13" height="13" rx="2" fill="#cfcfcf" stroke="#707070" stroke-width="1.100"/>
<rect x="53.600" y="688.600" width="4.600" height="4.600" fill="#3f9ff4"/><rect x="58.400" y="688.600" width="4.600" height="4.600" fill="#1fa51f"/><rect x="53.600" y="693.400" width="4.600" height="4.600" fill="#f4b428"/><rect x="58.400" y="693.400" width="4.600" height="4.600" fill="#f2400c"/>
<path d="M75.800 685.500l3.600 5h-2.200v8.700h-2.800v-8.700h-2.200z" fill="#8cd4ff" stroke="#1a8cec" stroke-width="1.100" stroke-linejoin="round"/>
<path d="M80 692.500h3.500M80 695.500h5M80 698.500h7" stroke="#1a9cf0" stroke-width="1.600"/><path d="M80 691.500v8" stroke="#1a8cec" stroke-width="1"/>
<circle cx="923.700" cy="692.500" r="7" fill="url(#gBall)" stroke="#4a4a4a" stroke-width="1"/>
</svg>
<!-- /SMALL ICONS -->
<div id="wb"></div>
</body></html>
